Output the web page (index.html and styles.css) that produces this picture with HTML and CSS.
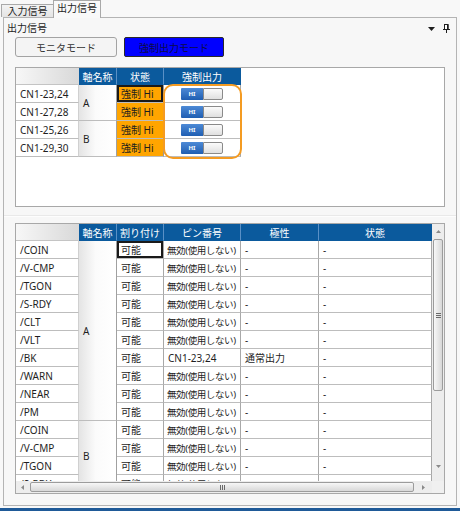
FILE: index.html
```html
<!DOCTYPE html>
<html lang="ja">
<head>
<meta charset="utf-8">
<title>出力信号</title>
<link rel="stylesheet" href="styles.css">
</head>
<body>
<div class="tabs">
  <div class="tab">入力信号</div>
  <div class="tab active">出力信号</div>
</div>
<div class="panel">
  <div class="panel-head">
    <span class="panel-title">出力信号</span>
    <span class="panel-tools">
      <svg class="ico-drop" width="7" height="4" viewBox="0 0 7 4"><path d="M0 0H7L3.5 4Z" fill="#1e1e1e"/></svg>
      <svg class="ico-pin" width="7" height="9" viewBox="0 0 7 9"><rect x="1.5" y="0.5" width="3.5" height="5" fill="#fff" stroke="#1e1e1e"/><rect x="4" y="0.5" width="1.5" height="5" fill="#1e1e1e"/><path d="M0 5.5H7M3.5 6V9" stroke="#1e1e1e" fill="none"/></svg>
    </span>
  </div>
  <div class="modes">
    <button class="mode">モニタモード</button>
    <button class="mode forced">強制出力モード</button>
  </div>

  <div class="upper">
    <div class="grid grid-up">
      <div class="c h h0"></div>
      <div class="c h">軸名称</div>
      <div class="c h">状態</div>
      <div class="c h hl">強制出力</div>

      <div class="c nm">CN1-23,24</div>
      <div class="c ax span2">A</div>
      <div class="c st sel">強制 Hi</div>
      <div class="c tc"><div class="tgl"><span class="tgl-on">HI</span><span class="tgl-off"></span></div></div>

      <div class="c nm">CN1-27,28</div>
      <div class="c st">強制 Hi</div>
      <div class="c tc"><div class="tgl"><span class="tgl-on">HI</span><span class="tgl-off"></span></div></div>

      <div class="c nm">CN1-25,26</div>
      <div class="c ax span2">B</div>
      <div class="c st">強制 Hi</div>
      <div class="c tc"><div class="tgl"><span class="tgl-on">HI</span><span class="tgl-off"></span></div></div>

      <div class="c nm">CN1-29,30</div>
      <div class="c st">強制 Hi</div>
      <div class="c tc"><div class="tgl"><span class="tgl-on">HI</span><span class="tgl-off"></span></div></div>
    </div>
    <div class="ring"></div>
  </div>

  <div class="splitter"></div>

  <div class="lower">
    <div class="viewport">
      <div class="grid grid-low">
        <div class="c h h0"></div>
        <div class="c h">軸名称</div>
        <div class="c h">割り付け</div>
        <div class="c h">ピン番号</div>
        <div class="c h">極性</div>
        <div class="c h hl">状態</div>

        <div class="c nm">/COIN</div>
        <div class="c ax span10">A</div>
        <div class="c as sel">可能</div>
        <div class="c pin">無効(使用しない)</div>
        <div class="c">-</div>
        <div class="c">-</div>

        <div class="c nm">/V-CMP</div>
        <div class="c as">可能</div>
        <div class="c pin">無効(使用しない)</div>
        <div class="c">-</div>
        <div class="c">-</div>

        <div class="c nm">/TGON</div>
        <div class="c as">可能</div>
        <div class="c pin">無効(使用しない)</div>
        <div class="c">-</div>
        <div class="c">-</div>

        <div class="c nm">/S-RDY</div>
        <div class="c as">可能</div>
        <div class="c pin">無効(使用しない)</div>
        <div class="c">-</div>
        <div class="c">-</div>

        <div class="c nm">/CLT</div>
        <div class="c as">可能</div>
        <div class="c pin">無効(使用しない)</div>
        <div class="c">-</div>
        <div class="c">-</div>

        <div class="c nm">/VLT</div>
        <div class="c as">可能</div>
        <div class="c pin">無効(使用しない)</div>
        <div class="c">-</div>
        <div class="c">-</div>

        <div class="c nm">/BK</div>
        <div class="c as">可能</div>
        <div class="c">CN1-23,24</div>
        <div class="c">通常出力</div>
        <div class="c">-</div>

        <div class="c nm">/WARN</div>
        <div class="c as">可能</div>
        <div class="c pin">無効(使用しない)</div>
        <div class="c">-</div>
        <div class="c">-</div>

        <div class="c nm">/NEAR</div>
        <div class="c as">可能</div>
        <div class="c pin">無効(使用しない)</div>
        <div class="c">-</div>
        <div class="c">-</div>

        <div class="c nm">/PM</div>
        <div class="c as">可能</div>
        <div class="c pin">無効(使用しない)</div>
        <div class="c">-</div>
        <div class="c">-</div>

        <div class="c nm">/COIN</div>
        <div class="c ax span4 ax-b">B</div>
        <div class="c as">可能</div>
        <div class="c pin">無効(使用しない)</div>
        <div class="c">-</div>
        <div class="c">-</div>

        <div class="c nm">/V-CMP</div>
        <div class="c as">可能</div>
        <div class="c pin">無効(使用しない)</div>
        <div class="c">-</div>
        <div class="c">-</div>

        <div class="c nm">/TGON</div>
        <div class="c as">可能</div>
        <div class="c pin">無効(使用しない)</div>
        <div class="c">-</div>
        <div class="c">-</div>

        <div class="c nm">/S-RDY</div>
        <div class="c as">可能</div>
        <div class="c pin">無効(使用しない)</div>
        <div class="c">-</div>
        <div class="c">-</div>
      </div>
    </div>
    <div class="vscroll">
      <div class="sb-arrow"><svg width="5" height="3" viewBox="0 0 5 3"><path d="M0 3H5L2.5 0Z" fill="#8a8a8a"/></svg></div>
      <div class="vthumb"><span class="grip-h"></span></div>
      <div class="sb-fill"></div>
      <div class="sb-arrow sb-down"><svg width="5" height="3" viewBox="0 0 5 3"><path d="M0 0H5L2.5 3Z" fill="#8a8a8a"/></svg></div>
    </div>
    <div class="hscroll">
      <div class="sb-arrow-h"><svg width="3" height="5" viewBox="0 0 3 5"><path d="M3 0V5L0 2.5Z" fill="#8a8a8a"/></svg></div>
      <div class="hthumb"><span class="grip-v"></span></div>
      <div class="sb-fill"></div>
      <div class="sb-arrow-h sb-right"><svg width="3" height="5" viewBox="0 0 3 5"><path d="M0 0V5L3 2.5Z" fill="#8a8a8a"/></svg></div>
    </div>
    <div class="corner"></div>
  </div>
</div>
<div class="statusbar"></div>
</body>
</html>
```

FILE: styles.css
```css
html, body {
  margin: 0;
  padding: 0;
}

body {
  width: 460px;
  height: 511px;
  overflow: hidden;
  background: #f8f8f8;
  font-family: "Noto Sans", "Noto Sans CJK JP", sans-serif;
  font-size: 10px;
  color: #1e1e1e;
}

/* tabs */
.tabs {
  display: flex;
  align-items: flex-end;
  height: 17px;
  padding-left: 1px;
}

.tab {
  box-sizing: border-box;
  width: 53px;
  height: 13px;
  border: 1px solid #a9a9a9;
  border-bottom: 0;
  background: linear-gradient(#f3f3f3, #e4e4e4);
  text-align: center;
  line-height: 12px;
  font-size: 10px;
}

.tab.active {
  position: relative;
  z-index: 1;
  width: 48px;
  height: 18px;
  margin-left: -1px;
  margin-bottom: -1px;
  background: #f9f9f9;
  line-height: 15px;
}

/* panel */
.panel {
  box-sizing: border-box;
  width: 454px;
  height: 489px;
  margin-left: 3px;
  border: 1px solid #b4b4b4;
  background: #f7f7f7;
}

.panel-head {
  display: flex;
  justify-content: space-between;
  align-items: center;
  height: 19px;
  padding-left: 3px;
}

.panel-title {
  line-height: 17px;
  padding-top: 2px;
}

.panel-tools {
  display: flex;
  align-items: center;
  gap: 8px;
  margin-right: 6px;
  padding-top: 2px;
}

.ico-drop { display: block; margin-top: 1px; }
.ico-pin { display: block; }

.modes {
  display: flex;
  gap: 7px;
  margin-left: 11px;
  height: 20px;
}

.mode {
  box-sizing: border-box;
  width: 102px;
  height: 20px;
  padding: 0;
  border: 1px solid #a3a3a3;
  border-radius: 3px;
  background: #f4f4f4;
  font-family: "Noto Sans", "Noto Sans CJK JP", sans-serif;
  font-size: 10px;
  color: #333;
}

.mode.forced {
  width: 100px;
  border: 1px solid #2a2a2a;
  border-radius: 2px;
  background: #0000ff;
  color: #0c0c4a;
}

/* upper box */
.upper {
  position: relative;
  box-sizing: border-box;
  height: 140px;
  margin: 10px 11px 0 11px;
  border: 1px solid #a8a8a8;
  background: #fff;
}

.grid {
  display: grid;
}

.grid-up {
  grid-template-columns: 63px 38px 47px 77px;
  grid-template-rows: 17px repeat(4, 18px);
}

.grid-low {
  grid-template-columns: 63px 38px 47px 77px 78px 113px;
  grid-template-rows: 17px;
  grid-auto-rows: 18px;
}

.c {
  box-sizing: border-box;
  display: flex;
  align-items: center;
  padding-left: 4px;
  white-space: nowrap;
  overflow: hidden;
  background: #fff;
  border-right: 1px solid #a8a8a8;
  border-bottom: 1px solid #bdbdbd;
}

.pin {
  padding-left: 3px;
  font-size: 9.5px;
  letter-spacing: -0.4px;
}

.h {
  justify-content: center;
  padding-left: 0;
  background: #0b5a9d;
  color: #fff;
  border-right-color: #5a90c6;
  border-bottom-color: #0b5a9d;
}

.h.hl {
  border-right-color: #0b5a9d;
}

.h.h0 {
  background: linear-gradient(to right, #f7f7f7, #d9d9d9);
  border-right-color: #d9d9d9;
  border-bottom-color: #c4c4c4;
}

.nm {
  border-right-color: #d0d0d0;
}

.ax {
  background: linear-gradient(to right, #e4e4e4, #fbfbfb 45%, #fff);
  border-right-color: #a0a0a0;
}

.span2 { grid-row: span 2; }
.span4 { grid-row: span 4; }
.span10 { grid-row: span 10; }

.ax-b {
  padding-bottom: 2px;
}

.st {
  background: #ffa500;
  border-right-color: #9a9a9a;
}

.sel {
  box-shadow: inset 0 0 0 2px #1a1a1a;
}

.tc {
  justify-content: center;
  padding-left: 0;
}

.tgl {
  display: flex;
  width: 42px;
  height: 12px;
}

.tgl-on {
  width: 22px;
  background: linear-gradient(#4d8ad6, #1f5eb2);
  color: #fff;
  font-size: 6px;
  font-weight: bold;
  line-height: 12px;
  text-align: center;
  border-radius: 1px 0 0 1px;
}

.tgl-off {
  flex: 1;
  box-sizing: border-box;
  border: 1px solid #8a8a8a;
  border-radius: 0 2px 2px 0;
  background: linear-gradient(#fbfbfb, #e0e0e0);
}

.ring {
  position: absolute;
  left: 147px;
  top: 16px;
  box-sizing: border-box;
  width: 79px;
  height: 75px;
  border: 2px solid #f49b22;
  border-radius: 10px;
}

.splitter {
  height: 16px;
  background: linear-gradient(to bottom, transparent 8px, #e9e9e9 8px, #e9e9e9 9px, #fdfdfd 9px, #fdfdfd 10px, transparent 10px);
}

/* lower box */
.lower {
  box-sizing: border-box;
  height: 271px;
  margin: 0 11px;
  border: 1px solid #a8a8a8;
  background: #fff;
  display: grid;
  grid-template-columns: 1fr 12px;
  grid-template-rows: 1fr 12px;
}

.viewport {
  overflow: hidden;
}

.vscroll {
  display: flex;
  flex-direction: column;
  background: #ededed;
}

.sb-arrow {
  height: 14px;
  display: flex;
  align-items: center;
  justify-content: center;
  flex-shrink: 0;
}

.sb-arrow svg, .sb-arrow-h svg { display: block; }

.sb-down {
  height: 16px;
  align-items: flex-start;
  padding-top: 0;
}

.vthumb {
  box-sizing: border-box;
  height: 152px;
  margin: 1px 1px 0 1px;
  border: 1px solid #9c9c9c;
  border-radius: 2px;
  background: linear-gradient(to right, #f7f7f7, #d8d8d8);
  display: flex;
  align-items: center;
  justify-content: center;
  flex-shrink: 0;
}

.grip-h {
  width: 5px;
  height: 5px;
  background: repeating-linear-gradient(to bottom, #6a6a6a 0, #6a6a6a 1px, transparent 1px, transparent 2px);
}

.sb-fill {
  flex: 1;
}

.hscroll {
  display: flex;
  background: #ededed;
}

.sb-arrow-h {
  width: 13px;
  display: flex;
  align-items: center;
  justify-content: center;
  flex-shrink: 0;
}

.sb-right {
  width: 18px;
}

.hthumb {
  box-sizing: border-box;
  width: 384px;
  margin: 1px 0 1px 1px;
  border: 1px solid #9c9c9c;
  border-radius: 2px;
  background: linear-gradient(#f7f7f7, #d8d8d8);
  display: flex;
  align-items: center;
  justify-content: center;
  flex-shrink: 0;
}

.grip-v {
  width: 5px;
  height: 5px;
  background: repeating-linear-gradient(to right, #6a6a6a 0, #6a6a6a 1px, transparent 1px, transparent 2px);
}

.corner {
  background: #f0f0f0;
}

.statusbar {
  height: 3px;
  margin-top: 2px;
  background: #1f5a98;
}
```
